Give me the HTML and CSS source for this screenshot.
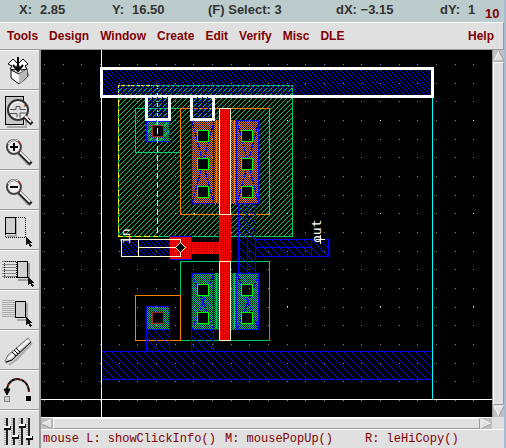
FILE: index.html
```html
<!DOCTYPE html>
<html lang="en">
<head>
    <meta charset="UTF-8">
    <meta name="viewport" content="width=device-width, initial-scale=1.0">
    <title>Layout Editor</title>
    <link rel="stylesheet" href="styles.css">
</head>
<body>

    <!-- Cursor coordinates and selection count -->
    <header class="status">
        <span class="field"><span>X:</span><span>2.85</span></span>
        <span class="field"><span>Y:</span><span>16.50</span></span>
        <span>(F) Select: 3</span>
        <span>dX: −3.15</span>
        <span class="field"><span>dY:</span><span>1</span></span>
        <span class="window-number">10</span>
    </header>

    <nav class="menu">
        <button>Tools</button>
        <button>Design</button>
        <button>Window</button>
        <button>Create</button>
        <button>Edit</button>
        <button>Verify</button>
        <button>Misc</button>
        <button>DLE</button>
        <button class="help">Help</button>
    </nav>

    <div class="workspace">
        <!-- Icon toolbar -->
        <aside class="toolbar">
            <button aria-label="Save">
                <svg viewBox="0 0 38 38">
                    <path d="M22 32l8-8-3-4v8z" fill="#a0a0a0"/>
                    <path d="M11 19l8 4 8-5v8l-8 7-8-6z" fill="#fff" stroke="#000"/>
                    <path d="M19 23v10l8-7v-8z" fill="#b8b8b8"/>
                    <path d="M8 13l5-5 5 5-3 6-5-1 2-3zM28 13l-5-5-5 5 3 6 6-1-2-3z" fill="#fff" stroke="#000"/>
                    <path d="M18 6v13M13 14l5 6 5-6" fill="none" stroke="#000" stroke-width="2"/>
                </svg>
            </button>
            <button aria-label="Fit">
                <svg viewBox="0 0 38 38">
                    <path d="M7 36h19V24" fill="none" stroke="#aaa" stroke-width="2"/>
                    <rect x="5.500" y="5.500" width="18" height="28" fill="#c8c8c8" stroke="#000"/>
                    <circle cx="18" cy="19" r="10" fill="#ddd" stroke="#333" stroke-width="2"/>
                    <circle cx="18" cy="19" r="8" fill="none" stroke="#fff"/>
                    <path d="M10 18.500h6v-3h4v3h6M10 22.500h7v4M20 27v-5h6" fill="none" stroke="#555"/>
                    <path d="M25 26l7 7" stroke="#222" stroke-width="4"/>
                    <path d="M25 25l6 6" stroke="#fff" stroke-width="2"/>
                    <path d="M25 13v3M28 27l2 2" stroke="#a00000"/>
                </svg>
            </button>
            <button aria-label="Zoom in">
                <svg viewBox="0 0 38 38">
                    <path d="M19 23l10 11" stroke="#aaa" stroke-width="3"/>
                    <path d="M19 21l12 12" stroke="#222" stroke-width="4"/>
                    <path d="M19 20l11 11" stroke="#eee" stroke-width="2"/>
                    <circle cx="14" cy="16" r="7" fill="#eee" stroke="#444" stroke-width="2"/>
                    <path d="M8 13a7 7 0 0 1 10-3" fill="none" stroke="#fff"/>
                    <path d="M18 10l3 3M20 19l-2 2" stroke="#c03030"/>
                    <path d="M10 16h8M14 12v8" stroke="#000" stroke-width="2"/>
                </svg>
            </button>
            <button aria-label="Zoom out">
                <svg viewBox="0 0 38 38">
                    <path d="M19 23l10 11" stroke="#aaa" stroke-width="3"/>
                    <path d="M19 21l12 12" stroke="#222" stroke-width="4"/>
                    <path d="M19 20l11 11" stroke="#eee" stroke-width="2"/>
                    <circle cx="14" cy="16" r="7" fill="#eee" stroke="#444" stroke-width="2"/>
                    <path d="M8 13a7 7 0 0 1 10-3" fill="none" stroke="#fff"/>
                    <path d="M18 10l3 3M20 19l-2 2" stroke="#c03030"/>
                    <path d="M10 16h8" stroke="#000" stroke-width="2"/>
                </svg>
            </button>
            <button aria-label="Stretch">
                <svg viewBox="0 0 38 38" class="crisp">
                    <path d="M16 8v17H7" fill="none" stroke="#aaa" stroke-width="2"/>
                    <rect x="5.500" y="6.500" width="10" height="16" fill="#d0d0d0" stroke="#000"/>
                    <path d="M16 6.500h9.500V26.500H5.500V22" fill="none" stroke="#000" stroke-dasharray="1 1"/>
                    <path d="M26 26v8l2-2 2 4 2-1-2-3h2z" fill="#111"/>
                </svg>
            </button>
            <button aria-label="Copy">
                <svg viewBox="0 0 38 38" class="crisp">
                    <path d="M2 10.500h14M2 13.500h14M2 16.500h14M2 19.500h14M2 22.500h14M2 25.500h14" stroke="#888"/>
                    <path d="M18 28.500h11V12" fill="none" stroke="#999" stroke-width="2"/>
                    <rect x="4.500" y="10.500" width="12" height="16" fill="none" stroke="#000" stroke-dasharray="1 1"/>
                    <rect x="17.500" y="10.500" width="10" height="16" fill="#d0d0d0" stroke="#000"/>
                    <path d="M28 26v8l2-2 2 4 2-1-2-3h2z" fill="#111"/>
                </svg>
            </button>
            <button aria-label="Move">
                <svg viewBox="0 0 38 38" class="crisp">
                    <path d="M2 9.500h13M2 11.500h13M2 13.500h13M2 15.500h13M2 17.500h13M2 19.500h13M2 21.500h13M2 23.500h13M2 25.500h13" stroke="#aaa"/>
                    <path d="M17 28.500h10V12" fill="none" stroke="#aaa" stroke-width="2"/>
                    <rect x="15.500" y="10.500" width="10" height="16" fill="#d0d0d0" stroke="#000"/>
                    <path d="M26 26v8l2-2 2 4 2-1-2-3h2z" fill="#111"/>
                </svg>
            </button>
            <button aria-label="Edit properties">
                <svg viewBox="0 0 38 38">
                    <path d="M9 34l8-6 15-16" fill="none" stroke="#aaa" stroke-width="2"/>
                    <path d="M5 30l3-6L28 7l3 4-19 18-6 3z" fill="#ccc" stroke="#777"/>
                    <path d="M8 28L29 9" stroke="#fff" stroke-width="2"/>
                    <path d="M12 21l4 4M14 19l4 4M16 17l4 4M6 31l6-2L31 11" fill="none" stroke="#000"/>
                </svg>
            </button>
            <button aria-label="Undo">
                <svg viewBox="0 0 38 38">
                    <path d="M7 20C7 4 28 4 29 21" fill="none" stroke="#000" stroke-width="2"/>
                    <path d="M7 20C7 4 28 4 29 21" fill="none" stroke="#e03030" stroke-dasharray="2 3"/>
                    <path d="M4 18h6l-3 6z" fill="#000" stroke="#000"/>
                    <rect x="26" y="25" width="5" height="5" fill="#000"/>
                    <rect x="4.500" y="25.500" width="5" height="5" fill="#ccc" stroke="#333" stroke-dasharray="1 1"/>
                </svg>
            </button>
            <button aria-label="Options">
                <svg viewBox="0 0 38 38" class="crisp">
                    <path d="M5 7v27M12 7v27M19 7v27M27 7v27" stroke="#aaa" stroke-width="3" stroke-dasharray="1 1"/>
                    <path d="M7 7v27M14 7v27M22 7v27M29 7v27" stroke="#222" stroke-width="2"/>
                    <path d="M4 17h7M12 26h7M19 15h7M26 27h7" stroke="#111" stroke-width="4"/>
                    <path d="M4 16h6M12 25h6M19 14h6M26 26h6" stroke="#fff" stroke-width="2"/>
                </svg>
            </button>
        </aside>

        <main class="view">
            <!-- Inverter layout -->
            <svg class="drawing crisp" viewBox="41 50 451 367" preserveAspectRatio="xMinYMin meet">
                <defs>
                    <pattern id="grid" width="56" height="56" patternUnits="userSpaceOnUse">
                        <path d="M7 8h1v1h-1zM25 8h1v1h-1zM44 8h1v1h-1zM7 27h1v1h-1zM25 27h1v1h-1zM44 27h1v1h-1zM7 45h1v1h-1zM25 45h1v1h-1zM44 45h1v1h-1z" fill="#8888a0"/>
                    </pattern>
                    <pattern id="grid-major" width="93" height="93" patternUnits="userSpaceOnUse">
                        <rect x="8" y="27" width="1" height="1" fill="#fff"/>
                    </pattern>
                    <pattern id="metal" width="8" height="8" patternUnits="userSpaceOnUse">
                        <path d="M0 0h1v1h-1zM1 1h1v1h-1zM2 2h1v1h-1zM3 3h1v1h-1zM4 4h1v1h-1zM5 5h1v1h-1zM6 6h1v1h-1zM7 7h1v1h-1z" fill="#00f"/>
                    </pattern>
                    <pattern id="metal-dense" width="5" height="5" patternUnits="userSpaceOnUse">
                        <path d="M0 0h1v1h-1zM1 1h1v1h-1zM2 2h1v1h-1zM3 3h1v1h-1zM4 4h1v1h-1z" fill="#00f"/>
                    </pattern>
                    <pattern id="well" width="5" height="5" patternUnits="userSpaceOnUse">
                        <path d="M4 0h1v1h-1zM3 1h1v1h-1zM2 2h1v1h-1zM1 3h1v1h-1zM0 4h1v1h-1z" fill="#00cc66"/>
                    </pattern>
                    <pattern id="pdiff" width="2" height="2" patternUnits="userSpaceOnUse">
                        <path d="M0 0h1v1h-1zM1 1h1v1h-1z" fill="#ff8000"/>
                    </pattern>
                    <pattern id="ndiff" width="2" height="2" patternUnits="userSpaceOnUse">
                        <path d="M0 0h1v1h-1zM1 1h1v1h-1z" fill="#00cc66"/>
                    </pattern>
                    <pattern id="poly" width="2" height="2" patternUnits="userSpaceOnUse">
                        <path d="M0 0h2v1h-1v1h-1z" fill="#f00"/>
                    </pattern>
                    <g id="contact">
                        <rect x="0.500" y="0.500" width="11" height="11" fill="#000" stroke="#00ff00"/>
                    </g>
                    <g id="tap-contact">
                        <rect x="0.500" y="0.500" width="11" height="11" fill="#000" stroke="#a02828"/>
                    </g>
                </defs>

                <rect x="41" y="50" width="451" height="367" fill="#000"/>

                <!-- n-well -->
                <rect x="118.500" y="85.500" width="174" height="151" fill="url(#well)" stroke="#00cc66"/>
                <rect x="118.500" y="85.500" width="39" height="151" class="outline-yellow"/>

                <!-- Implants -->
                <g fill="none">
                    <rect x="135.500" y="108.500" width="45" height="44" stroke="#00cc66"/>
                    <rect x="180.500" y="108.500" width="89" height="106" stroke="#ff8000"/>
                    <rect x="180.500" y="261.500" width="89" height="79" stroke="#00cc66"/>
                    <rect x="135.500" y="295.500" width="45" height="45" stroke="#ff8000"/>
                </g>

                <!-- Metal -->
                <rect x="101" y="351" width="332" height="28" fill="url(#metal)"/>
                <path d="M101 351.500h332M101 379.500h332" stroke="#00f"/>
                <g fill="url(#metal)" stroke="#00f">
                    <rect x="146.500" y="329.500" width="23" height="22"/>
                    <rect x="191.500" y="329.500" width="22" height="22"/>
                    <rect x="238.500" y="203.500" width="17" height="70"/>
                    <rect x="255.500" y="239.500" width="73" height="17"/>
                </g>
                <path d="M247.500 203v70M255 247.500h56M311.500 239v17" stroke="#00f"/>

                <!-- Diffusion -->
                <rect x="191" y="120" width="68" height="84" fill="#000"/>
                <rect x="191" y="273" width="68" height="57" fill="#000"/>
                <g fill="url(#metal-dense)">
                    <rect x="146" y="121" width="24" height="21"/>
                    <rect x="146" y="306" width="24" height="24"/>
                    <rect x="191" y="120" width="23" height="84"/>
                    <rect x="236" y="120" width="23" height="84"/>
                    <rect x="191" y="273" width="23" height="57"/>
                    <rect x="236" y="273" width="23" height="57"/>
                </g>
                <rect x="191" y="120" width="68" height="84" fill="url(#pdiff)"/>
                <g fill="url(#ndiff)">
                    <rect x="191" y="273" width="68" height="57"/>
                    <rect x="146" y="121" width="24" height="21"/>
                    <rect x="146" y="306" width="24" height="24"/>
                </g>
                <g fill="none" stroke="#00f">
                    <rect x="146.500" y="121.500" width="23" height="20"/>
                    <rect x="146.500" y="306.500" width="23" height="23"/>
                    <rect x="191.500" y="120.500" width="22" height="83"/>
                    <rect x="236.500" y="120.500" width="22" height="83"/>
                    <rect x="191.500" y="273.500" width="22" height="56"/>
                    <rect x="236.500" y="273.500" width="22" height="56"/>
                    <path d="M192 121l22 83M214 121l-22 83M237 121l22 83M259 121l-22 83M192 274l22 56M214 274l-22 56M237 274l22 56M259 274l-22 56"/>
                </g>
                <path d="M216.500 120v83M234.500 120v83" stroke="#ff8000"/>
                <path d="M216.500 273v56M234.500 273v56" stroke="#00cc66"/>

                <!-- Poly gate and input strap -->
                <rect x="191" y="242" width="29" height="12" fill="url(#poly)"/>
                <rect x="219" y="108" width="12" height="233" fill="#200000"/>
                <rect x="219" y="108" width="12" height="233" fill="url(#poly)"/>
                <path d="M225 120v84M225 273v57" stroke="#f00" stroke-width="2"/>
                <path d="M219.500 214v47M230.500 214v47M191 242.500h28M191 253.500h28" stroke="#f00"/>
                <rect x="219.500" y="108.500" width="11" height="106" fill="none" stroke="#ffffcc"/>
                <rect x="219.500" y="261.500" width="11" height="79" fill="none" stroke="#ffffcc"/>
                <rect x="169.500" y="236.500" width="22" height="23" fill="url(#poly)" stroke="#00f"/>

                <!-- Contacts -->
                <use href="#contact" x="197" y="130"/>
                <use href="#contact" x="197" y="158"/>
                <use href="#contact" x="197" y="186"/>
                <use href="#contact" x="241" y="130"/>
                <use href="#contact" x="241" y="158"/>
                <use href="#contact" x="241" y="186"/>
                <use href="#contact" x="197" y="284"/>
                <use href="#contact" x="197" y="312"/>
                <use href="#contact" x="241" y="284"/>
                <use href="#contact" x="241" y="312"/>
                <use href="#tap-contact" x="152" y="125"/>
                <use href="#tap-contact" x="152" y="312"/>
                <path d="M157.500 119v24" class="outline-yellow"/>

                <!-- Selected supply rail and its two straps -->
                <rect x="101.500" y="68.500" width="331" height="28" fill="url(#metal-dense)" stroke="#fff" stroke-width="3"/>
                <path d="M146.500 97v22.500h23V97M191.500 97v22.500h22V97" fill="url(#metal-dense)" stroke="#fff" stroke-width="3"/>

                <!-- Input pin -->
                <rect x="121.500" y="239.500" width="48" height="17" fill="url(#metal-dense)"/>
                <rect x="121.500" y="239.500" width="59" height="17" fill="none" stroke="#ffffcc"/>
                <path d="M138.500 239v17M138 247.500h38" stroke="#ffffcc"/>
                <path d="M180.500 242.500l5 5-5 5-5-5z" fill="#000" stroke="#ffffcc"/>

                <rect x="41" y="50" width="451" height="367" fill="url(#grid)"/>
                <rect x="41" y="50" width="451" height="367" fill="url(#grid-major)"/>

                <!-- Axes and cell boundary -->
                <path d="M101.500 50v367M41 399.500h451" stroke="#fff"/>
                <path d="M432.500 98v301M101.500 385v2" stroke="#00ffff"/>

                <text class="label" transform="translate(130 244) rotate(-90)">in</text>
                <text class="label" transform="translate(321 243) rotate(-90)">out</text>
                <path d="M316 239.500h9M320.500 235v9" stroke="#fff"/>
            </svg>

            <div class="scroll vertical">
                <svg class="arrow" viewBox="0 0 12 12"><path d="M6 1l5 10H1z" fill="#e0e0e0"/><path d="M1 11L6 1" stroke="#fff"/><path d="M6 1l5 10H1" fill="none" stroke="#999"/></svg>
                <div class="thumb"></div>
                <svg class="arrow" viewBox="0 0 12 12"><path d="M1 1h10L6 11z" fill="#e0e0e0"/><path d="M11 1H1l5 10" fill="none" stroke="#fff"/><path d="M6 11l5-10" stroke="#999"/></svg>
            </div>

            <div class="scroll horizontal">
                <svg class="arrow" viewBox="0 0 12 12"><path d="M1 6l10-5v10z" fill="#e0e0e0"/><path d="M1 6l10-5" stroke="#fff"/><path d="M11 1v10L1 6" fill="none" stroke="#999"/></svg>
                <div class="thumb"></div>
                <svg class="arrow" viewBox="0 0 12 12"><path d="M11 6L1 1v10z" fill="#e0e0e0"/><path d="M11 6L1 1v10" fill="none" stroke="#fff"/><path d="M1 11l10-5" stroke="#999"/></svg>
            </div>

            <!-- Mouse button bindings -->
            <footer class="bindings">
                <span>mouse L: showClickInfo()</span>
                <span>M: mousePopUp()</span>
                <span>R: leHiCopy()</span>
            </footer>
        </main>
    </div>

</body>
</html>
```

FILE: styles.css
```css
* {
    box-sizing: border-box;
}

body {
    margin: 0;
    height: 100vh;
    display: flex;
    flex-direction: column;
    overflow: hidden;
    background-color: #e0e0e0;
    border-right: 2px solid #a8bcd4;
    font-family: "Liberation Sans", Arial, sans-serif;
    font-size: 12px;
    font-weight: bold;
    color: #800000;
}

button {
    margin: 0;
    padding: 0;
    border: 0;
    background: none;
    font: inherit;
    color: inherit;
}

svg {
    display: block;
}

.crisp {
    shape-rendering: crispEdges;
}

/* Status line */
.status {
    flex: none;
    height: 22px;
    display: grid;
    grid-template-columns: 93fr 96fr 128fr 104fr 45fr 19fr;
    padding-left: 19px;
    line-height: 20px;
    background-color: #bccccc;
    color: #333;
    font-size: 13px;
    white-space: nowrap;
}

.field {
    display: flex;
    gap: 8px;
}

.window-number {
    color: #800000;
    line-height: 28px;
}

/* Menu bar */
.menu {
    flex: none;
    height: 28px;
    display: flex;
    align-items: center;
    gap: 11px;
    padding: 0 9px 0 7px;
    border-top: 1px solid #fff;
    border-bottom: 1px solid #999;
    border-right: 1px solid #999;
}

.help {
    margin-left: auto;
}

.workspace {
    flex: 1;
    min-height: 0;
    display: flex;
}

/* Icon toolbar */
.toolbar {
    flex: none;
    width: 41px;
    overflow: hidden;
    border-right: 2px solid #999;
}

.toolbar button {
    display: block;
    width: 100%;
    height: 40px;
    border-top: 1px solid #fff;
    border-bottom: 1px solid #999;
}

.toolbar svg {
    width: 38px;
    height: 38px;
}

/* Drawing area with scroll bars */
.view {
    flex: 1;
    min-width: 0;
    display: grid;
    grid-template-columns: 1fr 12px;
    grid-template-rows: 1fr 12px 19px;
}

.drawing {
    width: 100%;
    height: 100%;
    min-height: 0;
    background-color: #000;
}

.scroll {
    display: flex;
    background-color: #c0c0c0;
}

.vertical {
    flex-direction: column;
    border-left: 1px solid #999;
}

.horizontal {
    border-top: 1px solid #fff;
}

.arrow {
    flex: none;
    width: 12px;
    height: 12px;
}

.thumb {
    flex: 1;
    background-color: #e0e0e0;
    border: 1px solid #fff;
    border-right-color: #999;
    border-bottom-color: #999;
}

.bindings {
    grid-column: 1 / -1;
    display: grid;
    grid-template-columns: 182px 140px 1fr;
    padding-left: 2px;
    border-top: 1px solid #fff;
    font-family: "Liberation Mono", "Courier New", monospace;
    font-weight: normal;
    line-height: 18px;
    white-space: nowrap;
}

.outline-yellow {
    fill: none;
    stroke: #ffff00;
    stroke-dasharray: 6 3;
}

.label {
    fill: #fff;
    font-family: "DejaVu Sans Mono", monospace;
    font-size: 13px;
    font-weight: normal;
}
```
